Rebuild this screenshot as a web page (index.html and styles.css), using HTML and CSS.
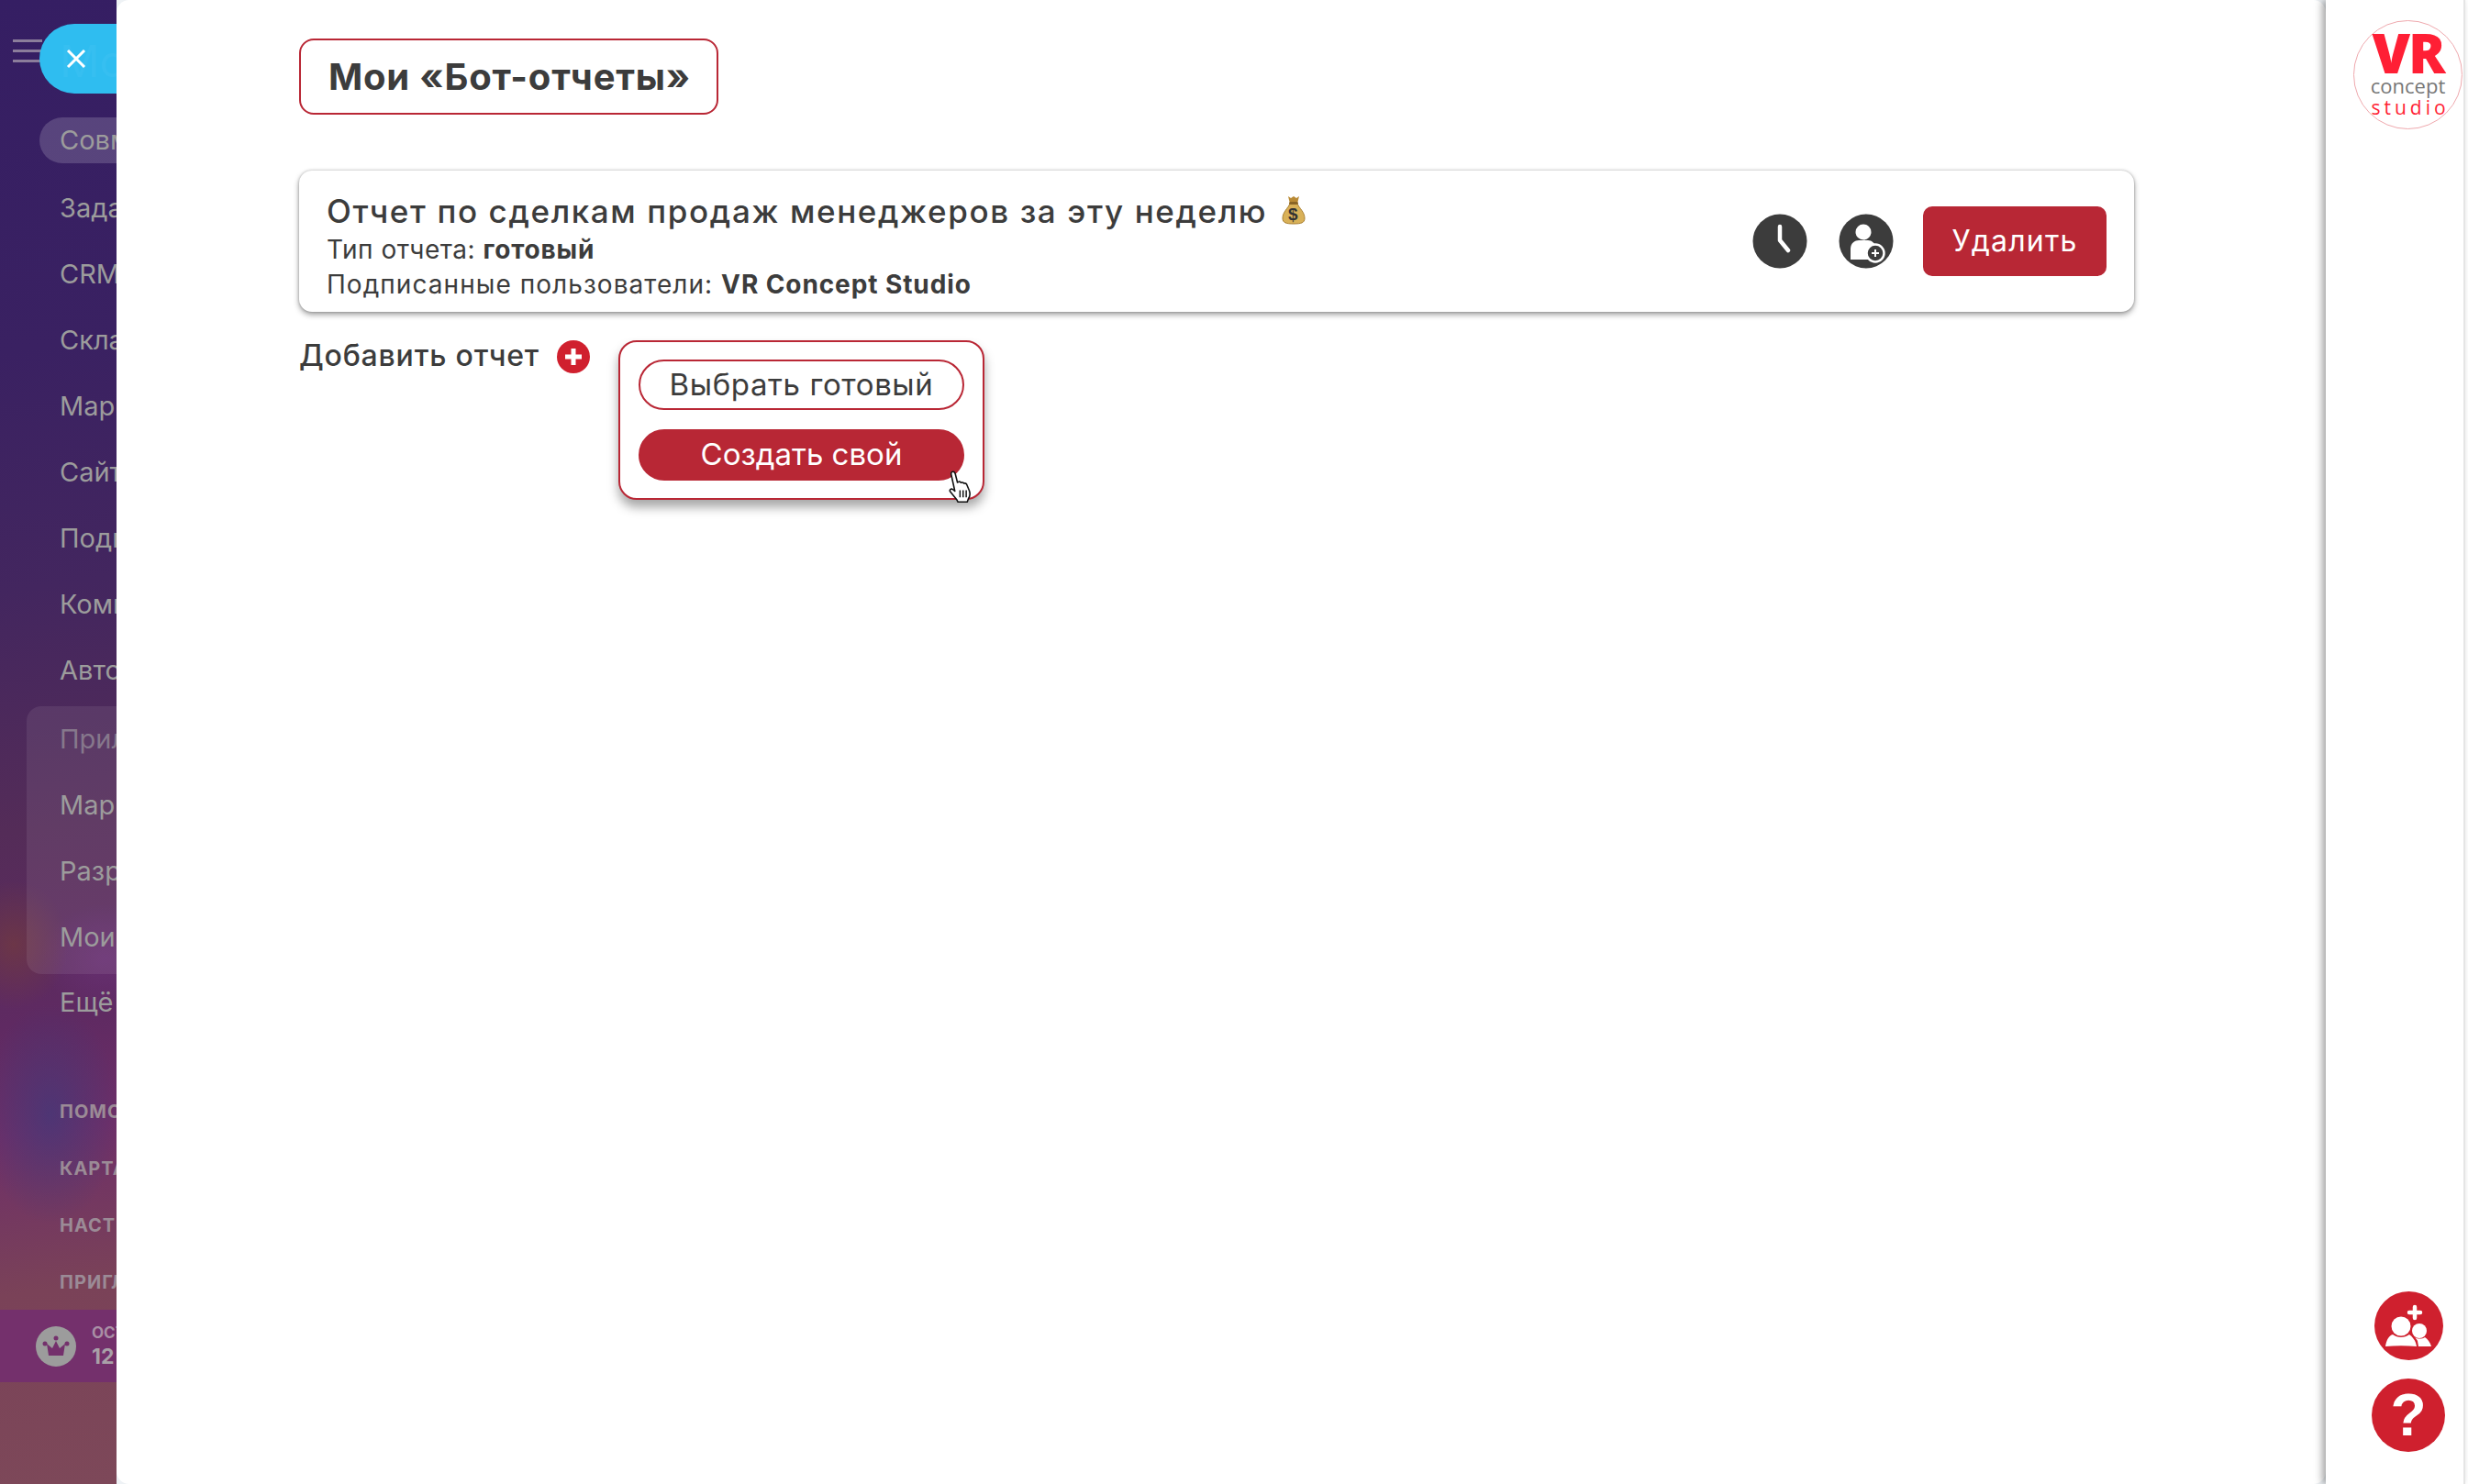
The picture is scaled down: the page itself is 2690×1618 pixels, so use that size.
FILE: index.html
```html
<!DOCTYPE html>
<html lang="ru">
<head>
  <meta charset="UTF-8">
  <title>Мои «Бот-отчеты»</title>
  <link rel="stylesheet" href="styles.css">
</head>
<body>
  <div class="layout">
    <aside class="sidebar">
      <div class="side-top">
        <div class="burger"><span></span><span></span><span></span></div>
        <button class="close-pill">
          <svg class="close-icon" viewBox="0 0 22 20" width="22" height="20"><path d="M2 1l18 18M20 1L2 19" stroke="#fff" stroke-width="3" fill="none"/></svg>
          <span class="close-ghost">Мои</span>
        </button>
      </div>
      <nav class="nav">
        <a class="nav-item active">Совместная работа</a>
        <a class="nav-item first-row">Задачи и Проекты</a>
        <a class="nav-item">CRM</a>
        <a class="nav-item">Склад</a>
        <a class="nav-item">Маркетинг</a>
        <a class="nav-item">Сайты и магазины</a>
        <a class="nav-item">Подписка</a>
        <a class="nav-item">Компания</a>
        <a class="nav-item">Автоматизация</a>
        <div class="nav-group">
          <a class="nav-item dim">Приложения</a>
          <a class="nav-item">Маркет</a>
          <a class="nav-item">Разработчикам</a>
          <a class="nav-item">Мои приложения</a>
        </div>
        <a class="nav-item more">Ещё</a>
      </nav>
      <div class="links">
        <a class="link">ПОМОЩЬ</a>
        <a class="link">КАРТА САЙТА</a>
        <a class="link">НАСТРОИТЬ МЕНЮ</a>
        <a class="link">ПРИГЛАСИТЬ</a>
      </div>
      <div class="plan">
        <span class="crown">
          <svg viewBox="0 0 44 44" width="44" height="44">
            <path d="M12 19l6 5 4-8 4 8 6-5-2 13H14z" fill="#74306c"/>
            <circle cx="10" cy="19" r="2.5" fill="#74306c"/>
            <circle cx="22" cy="13" r="2.5" fill="#74306c"/>
            <circle cx="34" cy="19" r="2.5" fill="#74306c"/>
          </svg>
        </span>
        <div class="plan-text">
          <div class="plan-label">ОСТАЛОСЬ</div>
          <div class="plan-days">12 дней</div>
        </div>
      </div>
    </aside>

    <div class="main">
      <main class="panel">
        <h1 class="page-title">Мои «Бот-отчеты»</h1>

        <section class="report-card">
          <div class="report-info">
            <div class="report-name">Отчет по сделкам продаж менеджеров за эту неделю
              <svg class="bag" viewBox="0 0 26 32" width="26" height="32">
                <path d="M7 1l3 2 3-2 3 2 3-2-2 8H9z" fill="#b98a35"/>
                <path d="M9 9h8c2 5 8 9 8 16 0 5-4 6-12 6S1 30 1 25c0-7 6-11 8-16z" fill="#d9b158" stroke="#a97f30"/>
                <rect x="8" y="7" width="10" height="3" rx="1.5" fill="#8a6526"/>
                <text class="bag-sign" x="13" y="27" text-anchor="middle">$</text>
              </svg>
            </div>
            <div class="report-line">Тип отчета: <b>готовый</b></div>
            <div class="report-line users">Подписанные пользователи: <b>VR Concept Studio</b></div>
          </div>
          <div class="report-actions">
            <button class="round-btn">
              <svg viewBox="0 0 60 60" width="60" height="60">
                <circle cx="30" cy="30" r="29.5" fill="#3c3c3c"/>
                <path d="M30 14v15l9 11" stroke="#fff" stroke-width="4.5" stroke-linecap="round" stroke-linejoin="round" fill="none"/>
              </svg>
            </button>
            <button class="round-btn">
              <svg viewBox="0 0 60 60" width="60" height="60">
                <circle cx="30" cy="30" r="29.5" fill="#3c3c3c"/>
                <circle cx="27" cy="20" r="8.5" fill="#fff"/>
                <path d="M13 50V38c0-6 5-9 9-9h10c4 0 7 3 8 6v15z" fill="#fff"/>
                <circle cx="40" cy="43" r="9.5" fill="#3c3c3c" stroke="#fff" stroke-width="2.5"/>
                <path d="M40 39v8M36 43h8" stroke="#fff" stroke-width="2"/>
              </svg>
            </button>
            <button class="delete-btn">Удалить</button>
          </div>
        </section>

        <div class="add-row">
          <span class="add-label">Добавить отчет</span>
          <svg class="add-plus" viewBox="0 0 36 36" width="36" height="36">
            <circle cx="18" cy="18" r="18" fill="#d0202e"/>
            <path d="M18 9v18M9 18h18" stroke="#fff" stroke-width="5"/>
          </svg>
          <div class="add-menu">
            <button class="menu-btn">Выбрать готовый</button>
            <button class="menu-btn filled">Создать свой</button>
            <svg class="hand" viewBox="0 0 24 32" width="27" height="36">
              <path d="M3 1.500c1.500-1 3 0 3.500 2l2 8 1-.5c1-.5 2 0 2.500.8 1-.6 2.200-.3 2.800.7 1-.4 2.200 0 2.700 1l2.500 6c1 3 .5 6-1 8l-1 3H9l-1-2-6.500-8c-1-1.500.5-3 2-2.500l2.500 2L2.500 4c-.2-1 0-2 .5-2.500z" fill="#fff" stroke="#111" stroke-width="1.400" stroke-linejoin="round"/>
              <path d="M11 19v7M14 19v7M17 19v7" stroke="#111" stroke-width="1.300"/>
            </svg>
          </div>
        </div>
      </main>
    </div>

    <aside class="strip">
      <div class="logo">
        <span class="logo-vr">VR</span>
        <span class="logo-concept">concept</span>
        <span class="logo-studio">studio</span>
      </div>
      <div class="strip-bottom">
        <button class="invite-btn">
          <svg viewBox="0 0 75 75" width="75" height="75">
            <circle cx="37.500" cy="37.500" r="37.500" fill="#cf202e"/>
            <path d="M44 17v12M38 23h12" stroke="#fff" stroke-width="4.500" stroke-linecap="round"/>
            <circle cx="29" cy="38" r="10.500" fill="#fff"/>
            <path d="M12 60c1-7 4-12 8-13 5 4 13 4 18 0 3 2 6 6 7 9l1 4c-11-1-23-1-34 0z" fill="#fff"/>
            <circle cx="49" cy="43" r="8" fill="#fff"/>
            <path d="M48 60l-1-6c-1-2-2-3-3-4 3 2 8 2 11 0 3 2 6 6 7 10z" fill="#fff"/>
          </svg>
        </button>
        <button class="help-btn">?</button>
      </div>
    </aside>
  </div>
</body>
</html>
```
FILE: styles.css
```css
html, body {
  margin: 0;
  padding: 0;
  height: 100%;
  background-color: #fff;
  overflow: hidden;
}

body {
  font-family: Inter, "Noto Sans", sans-serif;
  color: #3c3c3c;
}

button {
  font-family: inherit;
  cursor: pointer;
}

.layout {
  display: flex;
  height: 1618px;
}

/* Left menu, dimmed behind the slider */
.sidebar {
  width: 127px;
  flex-shrink: 0;
  overflow: hidden;
  display: flex;
  flex-direction: column;
  white-space: nowrap;
  color: #9c9c9c;
  background:
    radial-gradient(ellipse 75px 120px at 55px 1215px, rgba(58, 58, 125, .6), transparent),
    radial-gradient(ellipse 60px 70px at 15px 1030px, rgba(125, 65, 50, .5), transparent),
    radial-gradient(ellipse 70px 60px at 115px 1045px, rgba(110, 50, 125, .6), transparent),
    linear-gradient(172deg, #351e63 0, #3a2162 380px, #43265f 640px, #542c58 900px, #5f2a62 1110px, #6e2f68 1230px, #7a4258 1400px, #7d4859 1618px);
}

.side-top {
  display: flex;
  align-items: center;
  margin-top: 26px;
  padding-left: 14px;
}

.burger {
  width: 32px;
  flex-shrink: 0;
  margin-top: -9px;
}

.burger span {
  display: block;
  height: 3px;
  margin-bottom: 8px;
  background-color: #8b7d9b;
}

.close-pill {
  flex-shrink: 0;
  position: relative;
  display: flex;
  align-items: center;
  width: 160px;
  height: 76px;
  margin-left: -3px;
  padding: 0 0 0 29px;
  border: none;
  border-radius: 38px;
  background-color: #2fbdf0;
}

.close-ghost {
  position: absolute;
  left: 22px;
  top: 11px;
  font-size: 48px;
  color: #36bff1;
}

.close-icon {
  position: relative;
  z-index: 1;
}

.nav {
  margin-top: 26px;
  font-size: 29px;
}

.nav-item {
  display: block;
  height: 72px;
  line-height: 72px;
  padding-left: 65px;
}

.nav-item.active {
  height: 50px;
  line-height: 50px;
  margin: 0 0 13px 43px;
  padding-left: 22px;
  border-radius: 25px 0 0 25px;
  background-color: rgba(255, 255, 255, .17);
}

.nav-item.dim {
  color: #86788c;
}

.nav-item.more {
  margin-top: -5px;
}

.nav-group {
  margin: 3px 0 0 29px;
  padding-bottom: 4px;
  border-radius: 16px 0 0 16px;
  background-color: rgba(255, 255, 255, .08);
}

.nav-group .nav-item {
  padding-left: 36px;
}

.links {
  margin-top: 52px;
}

.link {
  display: block;
  height: 62px;
  line-height: 62px;
  padding-left: 65px;
  font-size: 20px;
  font-weight: 700;
  letter-spacing: 1px;
  color: #9b8b96;
}

.link:last-child {
  height: 61px;
}

.plan {
  display: flex;
  align-items: center;
  height: 79px;
  padding-left: 39px;
  background-color: #74306c;
}

.crown {
  display: block;
  width: 44px;
  height: 44px;
  flex-shrink: 0;
  border-radius: 50%;
  background-color: #9c9c9c;
}

.plan-text {
  margin-left: 17px;
  font-weight: 700;
}

.plan-label {
  font-size: 17px;
  color: #a98fa5;
}

.plan-days {
  font-size: 23px;
  margin-top: 2px;
  color: #a9a0a8;
}

/* Slider with the reports */
.main {
  flex: 1;
  background-color: #eef2f5;
}

.panel {
  height: 100%;
  box-sizing: border-box;
  padding: 42px 0 0 199px;
  border-radius: 14px;
  background-color: #fff;
}

.page-title {
  width: 457px;
  height: 83px;
  box-sizing: border-box;
  margin: 0 0 61px;
  padding-left: 2px;
  border: 2px solid #b92735;
  border-radius: 16px;
  font-size: 40px;
  font-weight: 700;
  letter-spacing: .8px;
  line-height: 79px;
  text-align: center;
  white-space: nowrap;
}

.report-card {
  display: flex;
  justify-content: space-between;
  align-items: center;
  width: 2000px;
  height: 154px;
  box-sizing: border-box;
  padding: 0 30px;
  border-radius: 14px;
  background-color: #fff;
  box-shadow: 0 3px 6px rgba(0, 0, 0, .38), 0 0 3px rgba(0, 0, 0, .25);
}

.report-info {
  padding-top: 6px;
}

.report-name {
  display: flex;
  align-items: center;
  gap: 16px;
  height: 50px;
  padding-top: 2px;
  margin-bottom: -2px;
  font-size: 35px;
  font-weight: 500;
  letter-spacing: 1.62px;
  white-space: nowrap;
}

.bag {
  margin-top: -3px;
}

.bag-sign {
  font-family: "Liberation Sans", sans-serif;
  font-size: 19px;
  font-weight: 700;
  fill: #333;
}

.report-line {
  font-size: 28px;
  line-height: 38px;
  letter-spacing: .5px;
}

.report-line.users {
  letter-spacing: 1.05px;
}

.report-line b {
  font-weight: 700;
  letter-spacing: .8px;
}

.report-line.users b {
  letter-spacing: .9px;
}

.report-actions {
  display: flex;
  align-items: center;
}

.round-btn {
  display: block;
  width: 60px;
  height: 60px;
  margin-right: 34px;
  padding: 0;
  border: none;
  background: none;
}

.round-btn + .delete-btn {
  margin-left: -2px;
}

.delete-btn {
  width: 200px;
  height: 76px;
  border: none;
  border-radius: 10px;
  background-color: #b82735;
  color: #fff;
  font-size: 32px;
  letter-spacing: 1.200px;
  padding-bottom: 3px;
}

.add-row {
  display: flex;
  align-items: flex-start;
  margin-top: 31px;
}

.add-label {
  width: 260px;
  margin-top: -2px;
  font-size: 32px;
  letter-spacing: .8px;
  line-height: 38px;
  font-weight: 500;
  white-space: nowrap;
}

.add-plus {
  margin-left: 21px;
}

.add-menu {
  position: relative;
  display: flex;
  flex-direction: column;
  gap: 21px;
  width: 399px;
  height: 174px;
  box-sizing: border-box;
  margin-left: 31px;
  padding: 19px 20px;
  border: 2px solid #b92735;
  border-radius: 20px;
  background-color: #fff;
  box-shadow: 0 8px 12px rgba(0, 0, 0, .35);
}

.menu-btn {
  height: 55px;
  border: 2px solid #b92735;
  border-radius: 28px;
  background-color: #fff;
  color: #3c3c3c;
  font-size: 33px;
  letter-spacing: .6px;
  padding-bottom: 3px;
}

.menu-btn.filled {
  height: 56px;
  background-color: #b82735;
  color: #fff;
  letter-spacing: 0;
}

/* Mouse pointer caught in the screenshot */
.hand {
  position: absolute;
  left: 358px;
  top: 140px;
}

/* Right bar */
.strip {
  width: 150px;
  flex-shrink: 0;
  display: flex;
  flex-direction: column;
  justify-content: space-between;
  margin-right: 3px;
  border-right: 2px solid #e5e5e5;
  background-color: #fff;
  box-shadow: -4px 0 8px rgba(0, 0, 0, .35);
  position: relative;
}

.logo {
  display: flex;
  flex-direction: column;
  align-items: center;
  width: 119px;
  height: 119px;
  box-sizing: border-box;
  margin: 22px 0 0 30px;
  border: 1px solid #efa9ae;
  border-radius: 50%;
  font-family: "Open Sans", sans-serif;
  color: #ff1f35;
}

.logo-vr {
  margin-top: 8px;
  height: 52px;
  font-size: 60px;
  line-height: 52px;
  font-weight: 800;
  letter-spacing: -2px;
}

.logo-concept {
  margin-top: -1px;
  height: 22px;
  font-size: 22px;
  line-height: 22px;
  color: #777;
}

.logo-studio {
  margin: 1px 0 0 5px;
  font-size: 21px;
  line-height: 24px;
  letter-spacing: 4px;
}

.strip-bottom {
  display: flex;
  flex-direction: column;
  align-items: center;
  gap: 20px;
  margin: 0 0 35px 30px;
}

.invite-btn {
  display: block;
  width: 75px;
  height: 75px;
  padding: 0;
  border: none;
  background: none;
}

.help-btn {
  width: 80px;
  height: 80px;
  padding: 0;
  border: none;
  border-radius: 50%;
  background-color: #cf202e;
  color: #fff;
  font-family: "Liberation Sans", sans-serif;
  font-size: 64px;
  font-weight: 700;
  line-height: 80px;
}
```
